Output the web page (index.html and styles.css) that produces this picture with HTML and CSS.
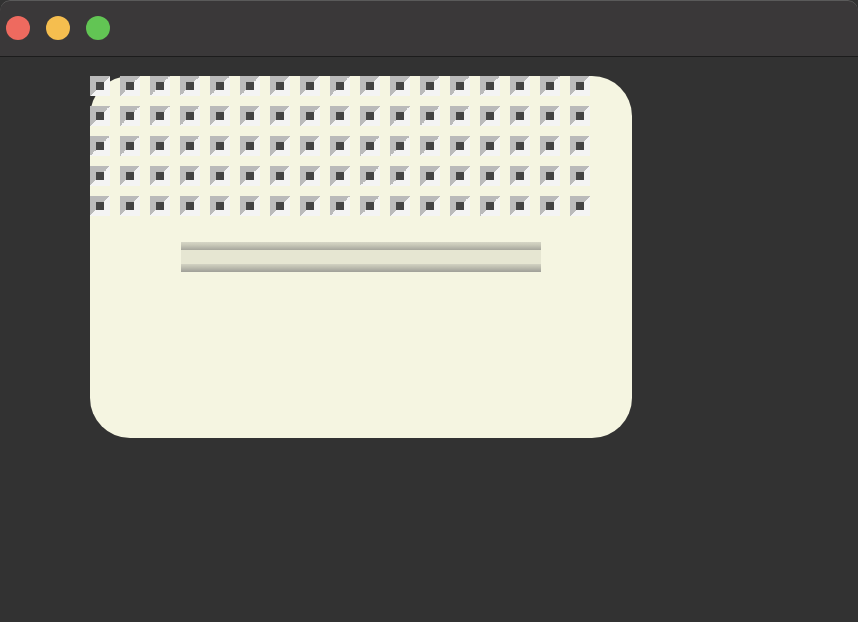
FILE: index.html
```html
<!DOCTYPE html>
<html>
<head>
<meta charset="utf-8">
<link rel="stylesheet" href="styles.css">
</head>
<body>
<div class="window">
  <div class="titlebar">
    <span class="light red"></span>
    <span class="light yellow"></span>
    <span class="light green"></span>
  </div>
  <div class="content">
    <div class="card">
      <div class="grid">
        <i></i><i></i><i></i><i></i><i></i><i></i><i></i><i></i><i></i><i></i><i></i><i></i><i></i><i></i><i></i><i></i><i></i>
        <i></i><i></i><i></i><i></i><i></i><i></i><i></i><i></i><i></i><i></i><i></i><i></i><i></i><i></i><i></i><i></i><i></i>
        <i></i><i></i><i></i><i></i><i></i><i></i><i></i><i></i><i></i><i></i><i></i><i></i><i></i><i></i><i></i><i></i><i></i>
        <i></i><i></i><i></i><i></i><i></i><i></i><i></i><i></i><i></i><i></i><i></i><i></i><i></i><i></i><i></i><i></i><i></i>
        <i></i><i></i><i></i><i></i><i></i><i></i><i></i><i></i><i></i><i></i><i></i><i></i><i></i><i></i><i></i><i></i><i></i>
      </div>
      <div class="bar"></div>
    </div>
  </div>
</div>
</body>
</html>
```

FILE: styles.css
```css
html, body {
  margin: 0;
  padding: 0;
  background: #323232;
  width: 858px;
  height: 622px;
  overflow: hidden;
  font-family: "Liberation Sans", sans-serif;
}
.window {
  width: 858px;
  height: 622px;
  background: #323232;
  border-radius: 10px 10px 0 0;
  overflow: hidden;
}
.titlebar {
  height: 56px;
  background: #3a3839;
  border-bottom: 1px solid #1c1c1c;
  box-shadow: inset 0 1px 0 #5a5a5a;
  border-radius: 10px 10px 0 0;
  display: flex;
  align-items: center;
  gap: 16px;
  padding-left: 6px;
  box-sizing: border-box;
  height: 57px;
}
.light {
  width: 24px;
  height: 24px;
  border-radius: 50%;
  display: block;
  margin-top: -1px;
}
.red { background: #ee6a5f; }
.yellow { background: #f5be4f; }
.green { background: #62c554; }
.content {
  padding: 19px 0 0 90px;
}
.card {
  width: 542px;
  height: 362px;
  background: #f5f5e1;
  border-radius: 40px;
}
.grid {
  display: grid;
  grid-template-columns: repeat(17, 20px);
  grid-auto-rows: 20px;
  gap: 10px;
}
.grid i {
  display: block;
  width: 20px;
  height: 20px;
  background:
    linear-gradient(#444444, #444444) center / 8px 8px no-repeat,
    linear-gradient(to bottom right, #bababa 50%, #f4f4f4 50%);
}
.bar {
  margin: 26px 0 0 91px;
  width: 360px;
  height: 30px;
  background: linear-gradient(to bottom,
    #d6d6c6 0px, #c8c8b8 3px, #b4b4a8 6px, #a6a69c 8px,
    #e6e6d2 8px, #e6e6d2 22px,
    #d2d2c2 22px, #c0c0b2 25px, #acaca2 28px, #a0a098 30px);
}
```
